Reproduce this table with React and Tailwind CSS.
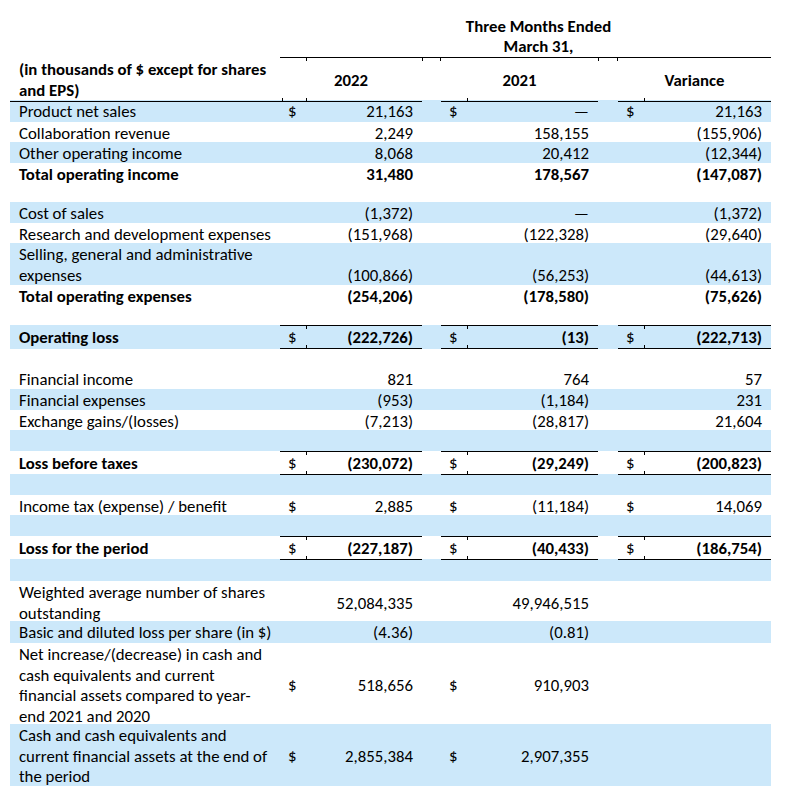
import React from "react";

// column widths: label | $ | 2022 | gap | $ | 2021 | gap | $ | variance
const COLS = "grid grid-cols-[270px_26px_116px_19px_26px_131px_20px_26px_127px]";

const rows = [
  { label: ["Product net sales"], bg: true, h: "h-[22px]", d1: "$", v1: "21,163", d2: "$", v2: "—", d3: "$", v3: "21,163" },
  { label: ["Collaboration revenue"], h: "h-[20px]", v1: "2,249", v2: "158,155", v3: "(155,906)" },
  { label: ["Other operating income"], bg: true, h: "h-[21px]", v1: "8,068", v2: "20,412", v3: "(12,344)" },
  { label: ["Total operating income"], bold: true, h: "h-[20px]", v1: "31,480", v2: "178,567", v3: "(147,087)" },
  { empty: true, h: "h-[19px]" },
  { label: ["Cost of sales"], bg: true, h: "h-[21px]", v1: "(1,372)", v2: "—", v3: "(1,372)" },
  { label: ["Research and development expenses"], h: "h-[20px]", v1: "(151,968)", v2: "(122,328)", v3: "(29,640)" },
  { label: ["Selling, general and administrative", "expenses"], bg: true, end: true, h: "h-[42px]", v1: "(100,866)", v2: "(56,253)", v3: "(44,613)" },
  { label: ["Total operating expenses"], bold: true, h: "h-[20px]", v1: "(254,206)", v2: "(178,580)", v3: "(75,626)" },
  { empty: true, h: "h-[20px]" },
  { label: ["Operating loss"], bold: true, bg: true, boxed: true, h: "h-[24px]", d1: "$", v1: "(222,726)", d2: "$", v2: "(13)", d3: "$", v3: "(222,713)" },
  { empty: true, h: "h-[19px]" },
  { label: ["Financial income"], h: "h-[21px]", v1: "821", v2: "764", v3: "57" },
  { label: ["Financial expenses"], bg: true, h: "h-[21px]", v1: "(953)", v2: "(1,184)", v3: "231" },
  { label: ["Exchange gains/(losses)"], h: "h-[20px]", v1: "(7,213)", v2: "(28,817)", v3: "21,604" },
  { empty: true, bg: true, h: "h-[21px]" },
  { label: ["Loss before taxes"], bold: true, boxed: true, h: "h-[23px]", d1: "$", v1: "(230,072)", d2: "$", v2: "(29,249)", d3: "$", v3: "(200,823)" },
  { empty: true, bg: true, h: "h-[21px]" },
  { label: ["Income tax (expense) / benefit"], h: "h-[20px]", d1: "$", v1: "2,885", d2: "$", v2: "(11,184)", d3: "$", v3: "14,069" },
  { empty: true, bg: true, h: "h-[21px]" },
  { label: ["Loss for the period"], bold: true, boxed: true, h: "h-[23px]", d1: "$", v1: "(227,187)", d2: "$", v2: "(40,433)", d3: "$", v3: "(186,754)" },
  { empty: true, bg: true, h: "h-[22px]" },
  { label: ["Weighted average number of shares", "outstanding"], h: "h-[40px]", v1: "52,084,335", v2: "49,946,515" },
  { label: ["Basic and diluted loss per share (in $)"], bg: true, h: "h-[22px]", v1: "(4.36)", v2: "(0.81)" },
  { label: ["Net increase/(decrease) in cash and", "cash equivalents and current", "financial assets compared to year-", "end 2021 and 2020"], h: "h-[81px]", d1: "$", v1: "518,656", d2: "$", v2: "910,903" },
  { label: ["Cash and cash equivalents and", "current financial assets at the end of", "the period"], bg: true, h: "h-[62px]", d1: "$", v1: "2,855,384", d2: "$", v2: "2,907,355" },
];

// little excel border joints
const TickTop = () => <span className="absolute left-0 top-0 h-[3px] w-px bg-black" />;
const TickBottom = () => <span className="absolute left-0 bottom-0 h-[3px] w-px bg-black" />;

function DataRow({ r }) {
  const align = r.end ? "items-end" : "items-center";
  const box = r.boxed ? "border-y border-black" : "";
  const weight = r.bold ? "font-bold" : "";

  const dollar = (d) => (
    <div className={`flex ${align} pt-[2px] pl-2 ${box}`}>{d}</div>
  );
  const value = (v) => (
    <div className={`relative flex ${align} justify-end pt-[2px] pr-[9px] ${box} ${weight}`}>
      {r.boxed && <TickTop />}
      {r.boxed && <TickBottom />}
      {v}
    </div>
  );

  return (
    <div className={`${COLS} ${r.h} ${r.bg ? "bg-[#cce8fa]" : ""}`}>
      <div className={`flex ${align} pt-[2px] pl-[9px] ${weight}`}>
        {!r.empty && (
          <div className="leading-[20.5px] whitespace-nowrap">
            {r.label.map((l, i) => (
              <div key={i}>{l}</div>
            ))}
          </div>
        )}
      </div>
      {dollar(r.d1)}
      {value(r.v1)}
      <div />
      {dollar(r.d2)}
      {value(r.v2)}
      <div />
      {dollar(r.d3)}
      {value(r.v3)}
    </div>
  );
}

export default function App() {
  return (
    <div
      className="min-h-[810px] w-[788px] bg-white text-black text-[16.8px] leading-[20px]"
      style={{ fontFamily: "Carlito, Calibri, Lato, sans-serif" }}
    >
      <div className="ml-[10px] w-[761px]">
        {/* Title */}
        <div className={`${COLS} h-[57px]`}>
          <div className="col-start-3 col-span-7 flex flex-col items-center justify-end font-bold leading-[20px]">
            <div>Three Months Ended</div>
            <div>March 31,</div>
          </div>
        </div>

        {/* Column header */}
        <div className={`${COLS} h-[43px] font-bold`}>
          <div className="flex items-center pt-[2px] pl-[9px] border-b border-black leading-[21px] whitespace-nowrap">
            <div>
              (in thousands of $ except for shares
              <br />
              and EPS)
            </div>
          </div>
          <div className="relative col-span-2 flex items-center justify-center pt-[2px] border-y border-black">
            <span className="absolute left-[26px] top-0 h-[3px] w-px bg-black" />
            <span className="absolute left-[26px] bottom-0 h-[3px] w-px bg-black" />
            <span className="absolute left-[2px] bottom-0 h-[3px] w-px bg-black" />
            2022
          </div>
          <div className="relative border-t border-black">
            <span className="absolute left-0 top-0 h-[3px] w-px bg-black" />
            <span className="absolute right-0 top-0 h-[3px] w-px bg-black" />
          </div>
          <div className="relative col-span-2 flex items-center justify-center pt-[2px] border-y border-black">
            <span className="absolute left-[26px] bottom-0 h-[3px] w-px bg-black" />
            2021
          </div>
          <div className="relative border-t border-black">
            <span className="absolute left-0 top-0 h-[3px] w-px bg-black" />
            <span className="absolute right-0 top-0 h-[3px] w-px bg-black" />
          </div>
          <div className="relative col-span-2 flex items-center justify-center pt-[2px] border-y border-black">
            <span className="absolute left-[26px] bottom-0 h-[3px] w-px bg-black" />
            Variance
          </div>
        </div>

        {rows.map((r, i) => (
          <DataRow key={i} r={r} />
        ))}
      </div>
    </div>
  );
}
